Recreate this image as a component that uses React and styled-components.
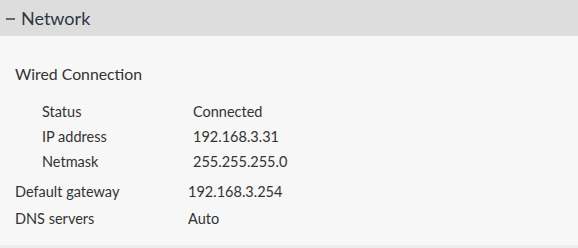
import React from 'react';
import styled, { createGlobalStyle } from 'styled-components';

const GlobalStyle = createGlobalStyle`
    html, body {
        margin: 0;
        padding: 0;
        background: #ececec;
        font-family: Lato, "Open Sans", sans-serif;
        color: #333;
    }
`;

const Panel = styled.div`
    width: 578px;
    height: 245px;
    background: #f7f7f7;
    display: flex;
    flex-direction: column;
`;

const Header = styled.div`
    height: 36px;
    background: #dddddd;
    display: flex;
    align-items: center;
    padding-left: 6px;
    gap: 6px;
    font-size: 18px;
    color: #2f3640;
`;

const Dash = styled.span`
    display: inline-block;
    width: 9px;
    height: 2px;
    background: #666;
    margin-top: 1px;
`;

const Body = styled.div`
    padding: 28px 0 0 15px;
`;

const SectionTitle = styled.div`
    font-size: 15.8px;
    line-height: 20px;
    color: #333;
`;

const Table = styled.div`
    display: grid;
    grid-template-columns: ${p => p.labelWidth}px auto;
    grid-auto-rows: ${p => p.rowHeight}px;
    align-items: center;
    padding-left: ${p => p.indent || 0}px;
    margin-top: ${p => p.top || 0}px;
    font-size: 14.5px;
    color: #333;
`;

const Cell = styled.div`
    white-space: nowrap;
`;

const wired = [
    ['Status', 'Connected'],
    ['IP address', '192.168.3.31'],
    ['Netmask', '255.255.255.0'],
];

const general = [
    ['Default gateway', '192.168.3.254'],
    ['DNS servers', 'Auto'],
];

export default function App() {
    return (
        <>
            <GlobalStyle />
            <Panel>
                <Header><Dash />Network</Header>
                <Body>
                    <SectionTitle>Wired Connection</SectionTitle>
                    <Table labelWidth={151} rowHeight={25} indent={27} top={15}>
                        {wired.map(([k, v]) => (
                            <React.Fragment key={k}>
                                <Cell>{k}</Cell>
                                <Cell>{v}</Cell>
                            </React.Fragment>
                        ))}
                    </Table>
                    <Table labelWidth={173} rowHeight={27} top={4}>
                        {general.map(([k, v]) => (
                            <React.Fragment key={k}>
                                <Cell>{k}</Cell>
                                <Cell>{v}</Cell>
                            </React.Fragment>
                        ))}
                    </Table>
                </Body>
            </Panel>
        </>
    );
}
